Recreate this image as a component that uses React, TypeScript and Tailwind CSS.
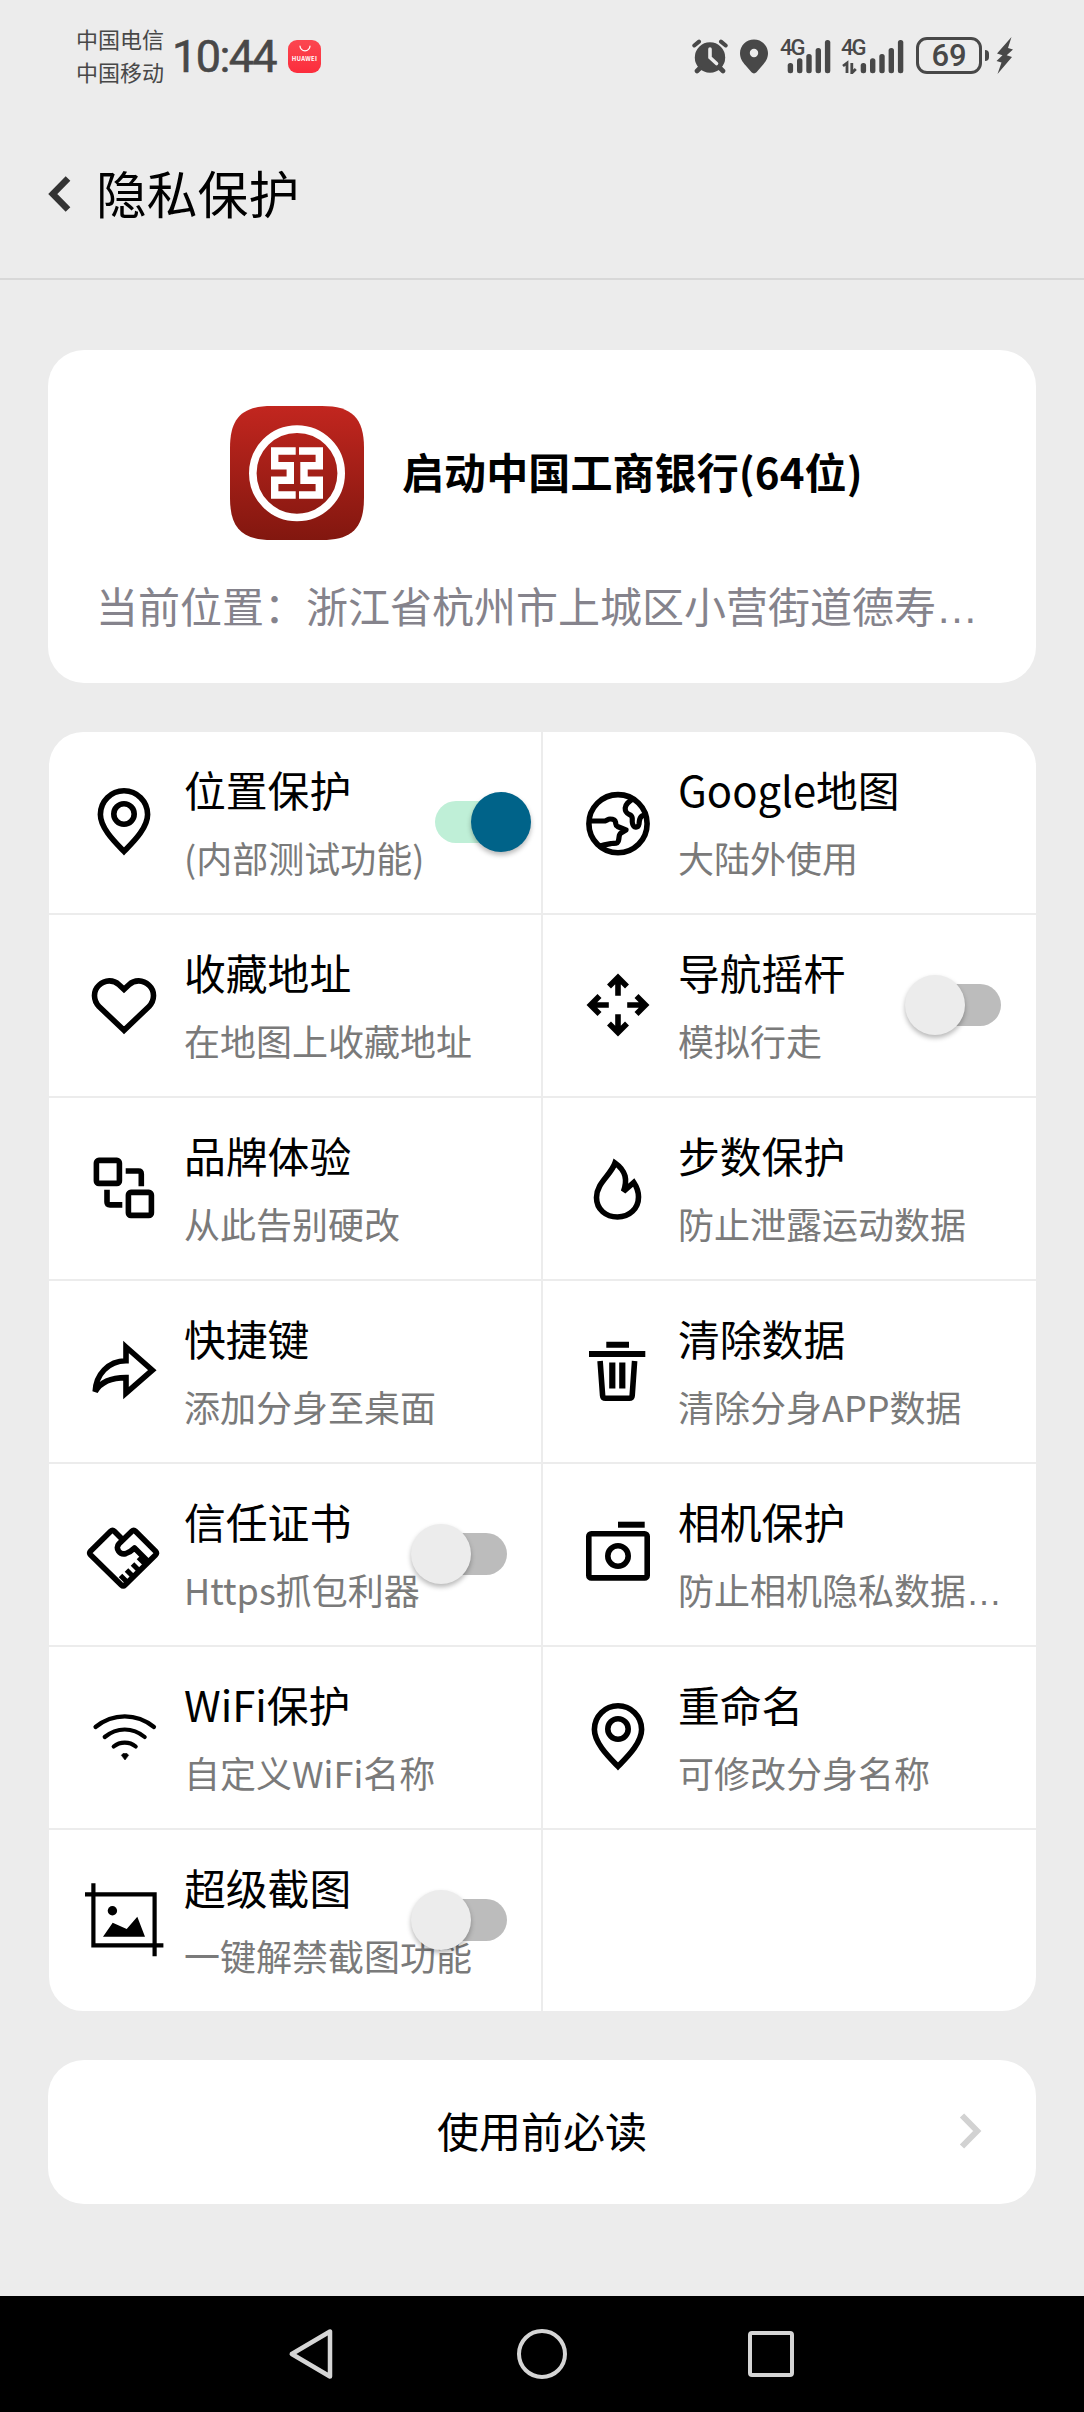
import type { ReactNode } from 'react';

const font = 'font-["Noto_Sans_CJK_SC",sans-serif]';

/* ---------- status bar ---------- */

function AlarmIcon() {
  return (
    <svg className="h-[35px] w-9" viewBox="0 0 36 35" fill="#484848" stroke="#484848" strokeLinecap="round">
      <circle cx="18" cy="18.5" r="15.2" stroke="none" />
      <path d="M2.3 6.5 7 2.6M33.7 6.5 29 2.6" strokeWidth="4" />
      <path d="M8 29l-3 3M28 29l3 3" strokeWidth="4.6" />
      <path d="M18 10v8.5l6.5 6" fill="none" stroke="#ececec" strokeWidth="3.6" />
    </svg>
  );
}

function PlaceIcon() {
  return (
    <svg className="h-[35px] w-7" viewBox="0 0 28 35">
      <path
        fill="#484848"
        fillRule="evenodd"
        d="M14 .5C6.300.5 0 6.600 0 14.300c0 5 2.500 8.700 5.700 12.300l5.800 6.700c1.400 1.500 3.600 1.500 5 0l5.800-6.700C25.500 23 28 19.300 28 14.300 28 6.600 21.700.5 14 .5Zm0 9.300a4.200 4.200 0 1 1 0 8.400 4.200 4.200 0 0 1 0-8.400Z"
      />
    </svg>
  );
}

function SignalIcon({ transfer = false }: { transfer?: boolean }) {
  const tops = [24, 19.3, 15, 9, 1];
  const start = transfer ? 18.7 : 6.7;
  return (
    <div className="relative">
      <svg className={transfer ? 'h-[35px] w-[62px]' : 'h-[35px] w-[50px]'} viewBox={transfer ? '0 0 62 35' : '0 0 50 35'} fill="#484848">
        {tops.map((t, i) => (
          <rect key={t} x={start + i * 9.3} y={t} width="5.400" height={34.3 - t} rx="2.500" />
        ))}
        {transfer && <path d="M1 27l4-3v10M9.800 24v10l4-4" fill="none" stroke="#484848" strokeWidth="2.800" />}
      </svg>
      <span className="absolute -top-[5px] -left-px font-[Roboto,sans-serif] text-[22px] leading-[27px] font-medium tracking-[-2px]">4G</span>
    </div>
  );
}

function StatusBar() {
  return (
    <div className="flex h-28 pt-[22px] pr-[71px] pl-[76px] text-[#484848]">
      <div className="flex w-24 flex-col text-[22px] leading-[33px]">
        <span>中国电信</span>
        <span>中国移动</span>
      </div>
      <div className="mt-[6px] w-[116px] font-[Roboto,sans-serif] text-[45px] leading-[58px] font-normal tracking-[-1.6px] [-webkit-text-stroke:0.6px_#484848]">10:44</div>
      <div className="mt-[18px] flex h-[33px] w-[33px] flex-col items-center rounded-[9px] bg-gradient-to-b from-[#fb4650] to-[#fc2c3c] pt-[5px] text-white">
        <svg className="h-[7px] w-3" viewBox="0 0 12 7" fill="none" stroke="#fff" strokeWidth="1.200" strokeLinecap="round">
          <path d="M1 1a5 4.800 0 0 0 10 0" />
        </svg>
        <span className="mt-[3px] text-[6px] leading-[8px] font-bold tracking-[0.3px]">HUAWEI</span>
      </div>
      <div className="mt-[17px] ml-auto flex h-[35px]">
        <AlarmIcon />
        <div className="w-3" />
        <PlaceIcon />
        <div className="w-[13px]" />
        <SignalIcon />
        <div className="w-[11px]" />
        <SignalIcon transfer />
        <div className="-mt-[2px] ml-[12px] flex h-[37px] w-[66px] items-center justify-center rounded-[11px] border-[3px] border-current font-[Roboto,sans-serif] text-[31px] leading-[31px] font-medium">
          69
        </div>
        <div className="mt-[11px] ml-[3px] h-[11px] w-1 rounded-r-sm bg-current" />
        <svg className="-mt-[2px] ml-[7px] h-[37px] w-[17px]" viewBox="0 0 17 37" fill="#484848">
          <path d="M15.500 0 1 16.500l5.500 1.800L.5 24l5 1.500L1.500 37 16 20l-5.300-1.800L17 12.500l-5-1.500Z" />
        </svg>
      </div>
    </div>
  );
}

/* ---------- feature icons, drawn on an 80 x 81 grid ---------- */

function Glyph({ children }: { children: ReactNode }) {
  return (
    <svg className="h-[81px] w-20 shrink-0" viewBox="0 0 80 81" fill="none" stroke="#000" strokeWidth="5.600">
      {children}
    </svg>
  );
}

const PinIcon = () => (
  <Glyph>
    <path d="M40 69.400C31 60 16.400 46 16.400 32.400a23.600 23.600 0 0 1 47.200 0C63.600 46 49 60 40 69.400Z" />
    <circle cx="40" cy="32" r="10.200" />
  </Glyph>
);

const GlobeIcon = () => (
  <Glyph>
    <circle cx="40" cy="41.700" r="29.100" />
    <g strokeWidth="5.200" strokeLinejoin="round">
      <path d="M12 39H27C29 38.500 30 37 32 37S37 37.500 37.500 40 37.500 43.500 39.500 44.500L48 48 43 51C40.500 52.500 41.500 55 40.500 58.500 39.500 62.500 36.500 61 33.500 61.500S27 62.500 20 64.500" />
      <path d="M55.500 16.500C51 19.500 47.500 21.500 47.200 26 47 31 50 31.500 53 33.500 55.500 35.500 53.500 38.500 54.500 41.500 55.500 46 60 46.500 61 42 61.700 37.500 61 36 64 34L69 32" />
    </g>
  </Glyph>
);

const HeartIcon = () => (
  <Glyph>
    <path d="M40 65.300 15 41.500C9.200 35.500 8.800 26 15 20.300 21 14.500 29.500 14.500 35 19.700L40 24.400 45 19.700C50.500 14.500 59 14.500 65 20.300 71.200 26 70.800 35.500 65 41.500Z" />
  </Glyph>
);

const MoveIcon = () => (
  <Glyph>
    {[0, 90, 180, 270].map((a) => (
      <path key={a} transform={`rotate(${a} 40 40)`} d="M31 21.500 40 12.500 49 21.500M40 12.500V30.800" />
    ))}
  </Glyph>
);

const SwapIcon = () => (
  <Glyph>
    <rect x="12.400" y="12.400" width="23" height="23" rx="2.500" />
    <rect x="44.400" y="44.400" width="23" height="23" rx="2.500" />
    <path d="M41.700 23H54.500Q57.300 23 57.300 26V38.200M23 41.700V54Q23 56.900 26 56.900H38.300" />
  </Glyph>
);

const FlameIcon = () => (
  <Glyph>
    <path d="M37 15C33 27 18.500 35 18.500 49.500 18.500 61.500 28 69 39.500 69 51.500 69 60.500 60.500 60.500 49 60.500 43 58.500 38.500 55.800 34.500L45.500 43.500C47.500 38 48 32 47 28 45.500 22.500 42 18.500 37 15Z" />
  </Glyph>
);

const ShareIcon = () => (
  <Glyph>
    <path d="M42 16 68.300 39.200 42 62V46.600C29 46.600 17.500 49.500 11.200 60.500 12 43.500 24 30 42 29.700Z" />
  </Glyph>
);

const TrashIcon = () => (
  <Glyph>
    <path d="M28.300 13.800H51M11 23H67.300" strokeWidth="6" />
    <path d="M22.100 30 24.600 64.500Q24.800 67.200 27.500 67.200H51.200Q54 67.200 54.200 64.500L56.600 30" />
    <path d="M34.300 31.500V57.500M44.300 31.500V57.500" strokeWidth="6.200" />
  </Glyph>
);

const HandshakeIcon = () => (
  <Glyph>
    <path
      strokeLinejoin="round"
      d="M38 25 30.300 17.200Q28.500 15.400 26.700 17.200L6.700 37Q4.800 39 6.700 41L37.300 71Q39.200 72.800 41 71L71.500 41Q73.300 39.200 71.500 37.200L51.500 17.200Q49.700 15.400 47.900 17.200L35 29.800C30.500 34.500 36 41.500 42 39.500 46 38 48 36.500 50.500 34L63 46.500"
    />
    <path d="M62 51 54.500 43.500M56 57.500 48.500 50M50 63.500 42.500 56M44 69 36.500 61.500" strokeWidth="5" />
  </Glyph>
);

const CameraIcon = () => (
  <Glyph>
    <path d="M40 10.700H66.700" strokeWidth="6" />
    <rect x="10.800" y="19.800" width="58.400" height="44.100" rx="2.500" />
    <circle cx="40" cy="42" r="10.200" />
  </Glyph>
);

const WifiGlyph = () => (
  <Glyph>
    <g strokeWidth="4.200" strokeLinecap="round">
      <path d="M11.500 30C29 15.800 52.500 15.800 70 30" />
      <path d="M20.700 40C33 30 48.500 30 60.700 40" />
      <path d="M29.700 49.500C36 44.300 45.500 44.300 51.700 49.500" />
    </g>
    <path d="M37.400 58.300 39 56.500H43L44.600 58.300 41 63Z" fill="#000" stroke="#000" strokeWidth="0.600" />
  </Glyph>
);

const CropIcon = () => (
  <Glyph>
    <path d="M1 14.400H70.600V76.300M9.400 3.300V65.400H79.400" strokeWidth="4.200" />
    <circle cx="28.400" cy="30.700" r="4.700" fill="#000" stroke="none" />
    <path d="M19 56.700 28.700 42.700 42.700 49 53.300 36.700 61 56.700Z" fill="#000" stroke="none" />
  </Glyph>
);

/* ---------- feature grid ---------- */

function Toggle({ on = false }: { on?: boolean }) {
  return on ? (
    <div className="absolute top-[60px] left-[386px] flex h-[60px] w-24 items-center justify-end">
      <div className="absolute left-0 h-[42px] w-[84px] rounded-full bg-[#bfefd7]" />
      <div className="relative size-[60px] rounded-full bg-[#006389] shadow-[0_3px_5px_rgba(0,0,0,0.28)]" />
    </div>
  ) : (
    <div className="absolute top-[60px] left-[362px] flex h-[60px] w-24 items-center">
      <div className="absolute right-0 h-[42px] w-[84px] rounded-full bg-[#bcbcbc]" />
      <div className="relative size-[60px] rounded-full bg-[#ececec] shadow-[0_3px_5px_rgba(0,0,0,0.28)]" />
    </div>
  );
}

/* Three dots on the baseline, as wide as one ideograph. */
const Ellipsis = () => <span className='font-["Liberation_Sans",sans-serif]'>…</span>;

type Feature = { title: string; note: string; icon: ReactNode; toggle?: 'on' | 'off'; cut?: boolean };

const features: Feature[] = [
  { title: '位置保护', note: '(内部测试功能)', icon: <PinIcon />, toggle: 'on' },
  { title: 'Google地图', note: '大陆外使用', icon: <GlobeIcon /> },
  { title: '收藏地址', note: '在地图上收藏地址', icon: <HeartIcon /> },
  { title: '导航摇杆', note: '模拟行走', icon: <MoveIcon />, toggle: 'off' },
  { title: '品牌体验', note: '从此告别硬改', icon: <SwapIcon /> },
  { title: '步数保护', note: '防止泄露运动数据', icon: <FlameIcon /> },
  { title: '快捷键', note: '添加分身至桌面', icon: <ShareIcon /> },
  { title: '清除数据', note: '清除分身APP数据', icon: <TrashIcon /> },
  { title: '信任证书', note: 'Https抓包利器', icon: <HandshakeIcon />, toggle: 'off' },
  { title: '相机保护', note: '防止相机隐私数据', icon: <CameraIcon />, cut: true },
  { title: 'WiFi保护', note: '自定义WiFi名称', icon: <WifiGlyph /> },
  { title: '重命名', note: '可修改分身名称', icon: <PinIcon /> },
  { title: '超级截图', note: '一键解禁截图功能', icon: <CropIcon />, toggle: 'off' },
];

function FeatureCell({ title, note, icon, toggle, cut }: Feature) {
  return (
    <div className="relative flex h-[181px] items-start bg-white pl-[35px]">
      <div className="pt-[50px]">{icon}</div>
      <div className="flex flex-col pt-6 pl-5 whitespace-nowrap">
        <span className="text-[41.8px] leading-[66px] text-black">{title}</span>
        <span className="h-[72px] text-[36px] leading-[71px] text-[#7a7a7a]">
          {note}
          {cut && <Ellipsis />}
        </span>
      </div>
      {toggle && <Toggle on={toggle === 'on'} />}
    </div>
  );
}

/* ---------- launch card ---------- */

function BankLogo() {
  return (
    <svg className="size-[134px]" viewBox="0 0 134 134" fill="none" stroke="#fff">
      <defs>
        <linearGradient id="bank" x1="0" y1="0" x2="0" y2="1">
          <stop offset="0" stopColor="#c2261f" />
          <stop offset="1" stopColor="#82170f" />
        </linearGradient>
      </defs>
      <path
        d="M0 42C0 12 12 0 42 0H92C122 0 134 12 134 42V92C134 122 122 134 92 134H42C12 134 0 122 0 92Z"
        fill="url(#bank)"
        stroke="none"
      />
      <circle cx="67" cy="67.300" r="44.200" strokeWidth="7.600" />
      <path d="M65.700 45H44.700V59.700H60.300V74.300H44.700V89H65.700M69 45H89.300V59.700H74V74.300H89.300V89H69" strokeWidth="7.400" />
    </svg>
  );
}

export default function App() {
  return (
    <div className={`flex h-[2412px] w-[1084px] flex-col overflow-hidden bg-[#ececec] ${font}`}>
      <StatusBar />

      <header className="flex h-[168px] items-center border-b-2 border-[#d8d8d8] pb-[2px] pl-12">
        <svg className="h-9 w-[23px]" viewBox="0 0 23 36" fill="none" stroke="#333" strokeWidth="6.500">
          <path d="M20 2.500 4.800 18 20 33.500" />
        </svg>
        <h1 className="-mt-[5px] ml-[25px] text-[50.800px] leading-[60px] text-black">隐私保护</h1>
      </header>

      <main className="flex flex-1 flex-col px-12 pt-[70px]">
        <section className="flex h-[333px] flex-col rounded-[36px] bg-white pt-14">
          <div className="flex items-center pl-[182px]">
            <BankLogo />
            <span className="mt-[-4px] ml-[38px] text-[42px] leading-[60px] font-bold tracking-[0.1px] whitespace-nowrap text-black">
              启动中国工商银行(64位)
            </span>
          </div>
          <p className="mt-[35px] pl-12 text-[42px] leading-[60px] whitespace-nowrap text-[#85838c]">
            当前位置：浙江省杭州市上城区小营街道德寿
            <Ellipsis />
          </p>
        </section>

        <section className="mt-[49px] ml-px grid grid-cols-[492px_493px] gap-[2px] overflow-hidden rounded-[34px] bg-[#ececec]">
          {features.map((f) => (
            <FeatureCell key={f.title} {...f} />
          ))}
          <div className="bg-white" />
        </section>

        <section className="relative mt-[49px] flex h-36 items-center justify-center rounded-[36px] bg-white">
          <span className="-mt-[4px] text-[42px] leading-[60px] text-black">使用前必读</span>
          <svg className="absolute top-[53px] right-[54px] h-9 w-[23px]" viewBox="0 0 23 36" fill="none" stroke="#d2d2d2" strokeWidth="6">
            <path d="M3 2.500 18.200 18 3 33.500" />
          </svg>
        </section>
      </main>

      <nav className="flex h-[116px] items-center bg-black pl-[288px]">
        <svg className="h-[52px] w-[45px]" viewBox="0 0 45 52" fill="none" stroke="#d5d5d5" strokeWidth="4.500" strokeLinejoin="round">
          <path d="M42 3.500V48.500L3.800 26Z" />
        </svg>
        <div className="ml-[184px] size-[50px] rounded-full border-4 border-[#d5d5d5]" />
        <div className="ml-[181px] size-[46px] rounded-[4px] border-4 border-[#d5d5d5]" />
      </nav>
    </div>
  );
}
